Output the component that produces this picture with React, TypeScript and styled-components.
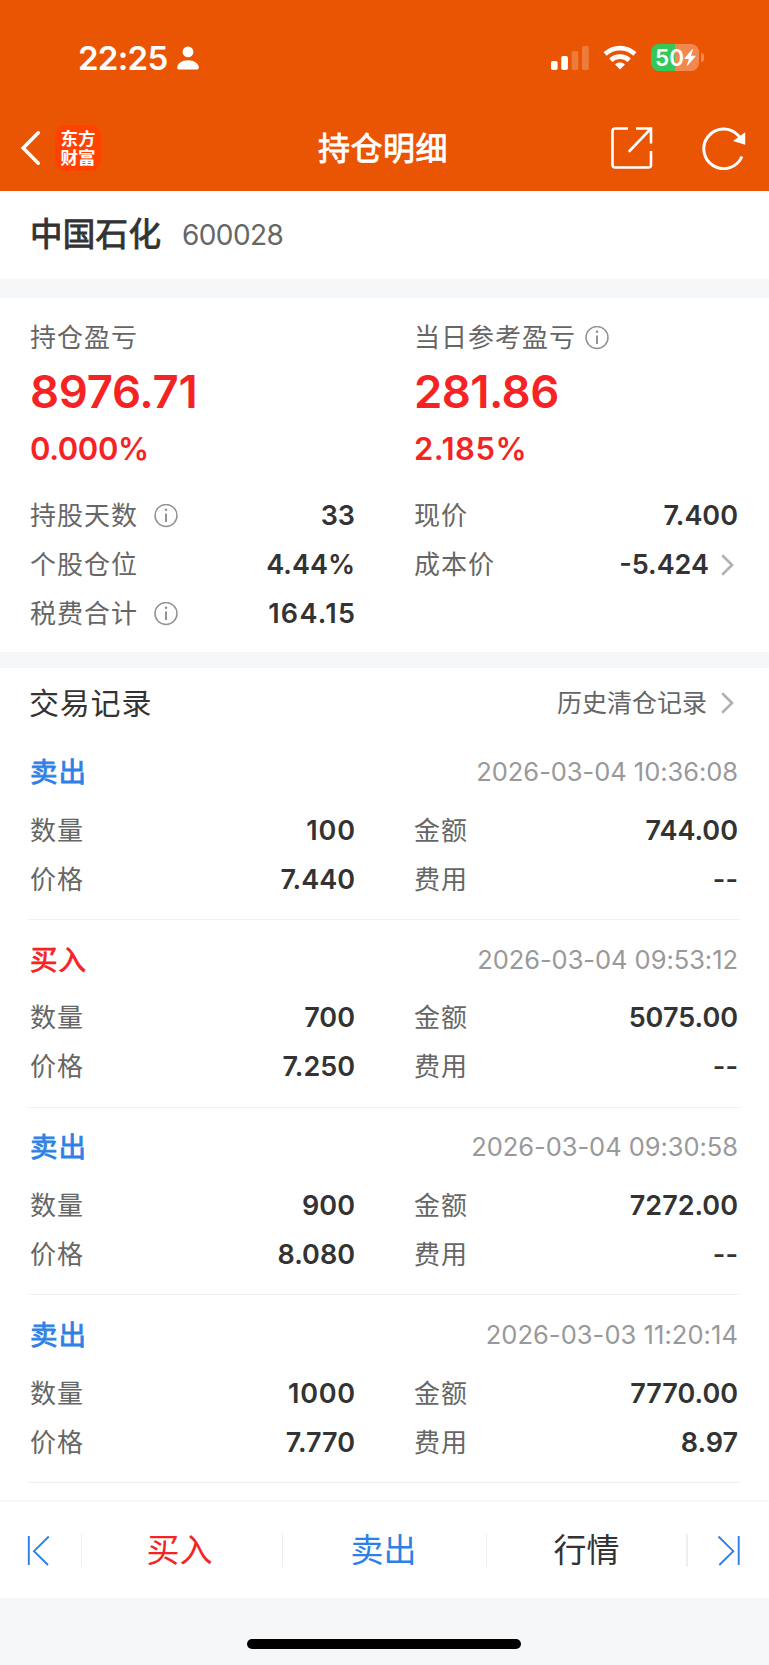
import React from 'react';
import styled, { createGlobalStyle } from 'styled-components';

const ORANGE = '#ea5504';
const RED = '#f52323';
const BLUE = '#2e7fe6';
const INK = '#333';
const GREY = '#666';

const Global = createGlobalStyle`
  * { box-sizing: border-box; }
  html, body { margin: 0; padding: 0; background: #fff; }
  body {
    font-family: Inter, 'Noto Sans CJK SC', sans-serif;
    color: ${INK};
    white-space: nowrap;
  }
  svg { display: block; flex: none; }
`;

const Screen = styled.div`
  width: 769px;
  height: 1665px;
  display: flex;
  flex-direction: column;
  overflow: hidden;
  background: #fff;
`;

const Header = styled.header`
  height: 191px;
  flex: none;
  background: ${ORANGE};
  color: #fff;
`;

const StatusBar = styled.div`
  height: 115px;
  padding: 0 65px 0 78px;
  display: flex;
  justify-content: space-between;
  align-items: center;
`;

const StatusGroup = styled.div<{ $gap: number }>`
  display: flex;
  align-items: center;
  gap: ${(p) => p.$gap}px;
`;

const Clock = styled.span`
  width: 90px;
  font-size: 33px;
  font-weight: 600;
  letter-spacing: -0.7px;
  line-height: 40px;
`;

const Battery = styled.div`
  position: relative;
  width: 48px;
  height: 27px;
  margin-right: 5px;
  border-radius: 8px;
  background: linear-gradient(90deg, #34c759 0 50.5%, #f28850 50.5%);
  display: flex;
  align-items: center;
  padding-left: 4px;
  font-size: 22.5px;
  font-weight: 600;

  &::after {
    content: '';
    position: absolute;
    left: 50px;
    top: 9px;
    width: 3px;
    height: 9px;
    border-radius: 0 3px 3px 0;
    background: #f28850;
  }
`;

const NavBar = styled.nav`
  height: 76px;
  padding: 0 23px 10px 20px;
  display: grid;
  grid-template-columns: 1fr auto 1fr;
  align-items: center;
`;

const NavSide = styled.div<{ $end?: boolean; $gap: number }>`
  display: flex;
  align-items: center;
  justify-content: ${(p) => (p.$end ? 'flex-end' : 'flex-start')};
  gap: ${(p) => p.$gap}px;
`;

const Logo = styled.div`
  width: 46px;
  height: 46px;
  border-radius: 10px;
  background: #ff4200;
  display: flex;
  flex-direction: column;
  align-items: center;
  justify-content: center;
  font-size: 17.5px;
  line-height: 19px;
  font-weight: 700;
`;

const NavTitle = styled.h1`
  margin: 0;
  padding-top: 2px;
  font-size: 32px;
  line-height: 40px;
  font-weight: 400;
  letter-spacing: 0.5px;
  -webkit-text-stroke: 0.8px currentColor;
`;

const StockBar = styled.section`
  height: 88px;
  flex: none;
  padding: 0 30px 1px;
  display: flex;
  align-items: center;
`;

const StockName = styled.span`
  width: 152px;
  font-size: 32.5px;
  font-weight: 400;
  letter-spacing: 0.3px;
  line-height: 44px;
  -webkit-text-stroke: 0.9px currentColor;
`;

const StockCode = styled.span`
  font-size: 28px;
  line-height: 34px;
  letter-spacing: -0.6px;
  color: ${GREY};
`;

const Gap = styled.div<{ $h: number }>`
  height: ${(p) => p.$h}px;
  flex: none;
  background: #f6f7f9;
`;

const Columns = styled.div`
  display: grid;
  grid-template-columns: 325px 324px;
  column-gap: 59px;
  padding: 0 30px;
`;

const Summary = styled.section`
  height: 354px;
  flex: none;
  padding-top: 20px;
`;

const Row = styled.div`
  height: 49px;
  display: flex;
  align-items: center;
`;

const Label = styled.span<{ $gap?: number }>`
  display: flex;
  align-items: center;
  gap: ${(p) => p.$gap ?? 16}px;
  font-size: 26px;
  line-height: 40px;
  height: 40px;
  letter-spacing: 1px;
  color: ${GREY};
`;

const Value = styled.span`
  margin-left: auto;
  font-size: 27px;
  line-height: 40px;
  font-weight: 600;
`;

const Profit = styled.div`
  height: 68px;
  font-size: 45.5px;
  line-height: 68px;
  font-weight: 600;
  color: ${RED};
`;

const Percent = styled.div`
  height: 46px;
  font-size: 31px;
  line-height: 46px;
  font-weight: 600;
  color: ${RED};
  margin-bottom: 19px;
`;

const Records = styled.section`
  height: 832px;
  flex: none;
`;

const RecordsHead = styled.div`
  height: 70px;
  padding: 0 31px 0 29px;
  display: flex;
  align-items: center;
  justify-content: space-between;
`;

const RecordsTitle = styled.h2`
  margin: 0;
  font-size: 30px;
  font-weight: 400;
  letter-spacing: 0.8px;
  line-height: 44px;
`;

const HistoryLink = styled.a`
  display: flex;
  align-items: center;
  font-size: 25px;
  line-height: 40px;
  color: ${GREY};
`;

const Record = styled.article`
  height: 187.7px;
`;

const RecordHead = styled.div`
  height: 68px;
  padding: 0 31px 0 30px;
  display: flex;
  align-items: center;
  justify-content: space-between;
`;

const Side = styled.span<{ $buy?: boolean }>`
  font-size: 27.5px;
  font-weight: 400;
  line-height: 40px;
  letter-spacing: 1px;
  color: ${(p) => (p.$buy ? RED : BLUE)};
  -webkit-text-stroke: 0.8px currentColor;
`;

const Time = styled.time<{ $spacing?: number }>`
  font-size: 25.5px;
  line-height: 40px;
  letter-spacing: ${(p) => p.$spacing ?? -0.05}px;
  color: #999;
`;

const Rule = styled.div`
  height: 1px;
  margin: 15px 30px 0 29px;
  background: #f0f0f1;
`;

const TabBar = styled.footer`
  height: 98px;
  flex: none;
  border-top: 2px solid #f6f7f8;
  display: grid;
  grid-template-columns: 81px 1px 200px 1px 203px 1px 199px 2px 81px;
  align-items: center;
  justify-items: center;
`;

const Tab = styled.span<{ $color: string; $shift?: number }>`
  margin-right: ${(p) => p.$shift ?? 0}px;
  font-size: 33px;
  line-height: 46px;
  color: ${(p) => p.$color};
`;

const Divider = styled.i`
  width: 100%;
  height: 33px;
  background: #eee;
`;

const HomeArea = styled.div`
  flex: 1;
  background: #f6f7f9;
  padding: 41px 0 0 247px;
`;

const HomeIndicator = styled.div`
  width: 274px;
  height: 10px;
  border-radius: 5px;
  background: #000;
`;

const Info = () => (
  <svg width="24" height="24" viewBox="0 0 24 24" fill="none" stroke="#929292">
    <circle cx="12" cy="11.500" r="11" strokeWidth="1.500" />
    <path d="M12 9.500v8.400" strokeWidth="2" />
    <circle cx="12" cy="5.800" r="1.300" fill="#929292" stroke="none" />
  </svg>
);

const Chevron = ({ left }: { left: number }) => (
  <svg width={left + 17} height="22" viewBox={`${-left} 0 ${left + 17} 22`} fill="none" stroke="#b2b2b2" strokeWidth="2.700">
    <path d="M1.200 1.300 11 11 1.200 20.700" />
  </svg>
);

const Person = () => (
  <svg width="22" height="24" viewBox="0 0 22 24" fill="#fff">
    <circle cx="11" cy="5.9" r="5.4" />
    <path d="M0.2 21.5C0.2 17.5 5 14.2 11 14.2s10.800 3.300 10.800 7.300c0 1.500-.8 2-2.200 2H2.400C1 23.500.2 23 .2 21.500Z" />
  </svg>
);

const Signal = () => (
  <svg width="38" height="24" viewBox="0 0 38 24" fill="#fff">
    <rect x="0" y="15" width="6.600" height="9" rx="1.800" />
    <rect x="10.300" y="10" width="6.600" height="14" rx="1.800" />
    <rect x="20.700" y="5" width="6.600" height="19" rx="1.800" opacity=".22" />
    <rect x="31" y="0" width="6.800" height="24" rx="1.800" opacity=".22" />
  </svg>
);

const Wifi = () => (
  <svg width="34" height="25" viewBox="0 0 34 25" fill="none" stroke="#fff" strokeWidth="4.600">
    <path d="M2.100 9C10.400 1.100 23.600 1.100 31.900 9" />
    <path d="M7.800 15.200c5.200-4.800 13.200-4.800 18.400 0" />
    <path d="M12.100 19.400c2.800-2.400 7-2.400 9.800 0L17 24.600Z" fill="#fff" stroke="none" />
  </svg>
);

const Bolt = () => (
  <svg width="12" height="17" viewBox="0 0 12 17" fill="#fff">
    <path d="M8.200.3.500 9.300c-.3.400-.1.700.3.700h4.100l-2 6.100c-.2.700.4.900.8.400l7.700-9c.3-.4.100-.8-.3-.8H7L9 .8C9.200.1 8.600-.1 8.200.3Z" />
  </svg>
);

const Back = () => (
  <svg width="21" height="36" viewBox="0 0 21 36" fill="none" stroke="#fff" strokeWidth="3.500" strokeLinecap="round" strokeLinejoin="miter">
    <path d="M18.300 2.800 3.200 18 18.300 33.200" />
  </svg>
);

const Share = () => (
  <svg width="42" height="42" viewBox="0 0 42 42" fill="none" stroke="#fff" strokeWidth="2.600">
    <path d="M17 1.500H4A2.500 2.500 0 0 0 1.500 4v34A2.500 2.500 0 0 0 4 40.500h33.500A2.500 2.500 0 0 0 40 38V24" />
    <path d="M25 1.500H40V16.500" />
    <path d="M39.500 2 18.500 24" strokeLinecap="round" />
  </svg>
);

const Refresh = () => (
  <svg width="44" height="44" viewBox="0 0 44 44" fill="none" stroke="#fff" strokeWidth="3">
    <path d="M39.900 30.500A19.800 19.800 0 1 1 36 9.200L38.500 12" />
    <path d="M43.200 6.200v12.600l-12.200-3.700Z" fill="#fff" stroke="none" />
  </svg>
);

const First = () => (
  <svg width="30" height="31" viewBox="0 0 30 31" fill="none" stroke={BLUE} strokeWidth="1.900">
    <path d="M2.800 1v29M22.800 1.500 8 16.200 22 30" />
  </svg>
);

const Last = () => (
  <svg width="24" height="31" viewBox="0 0 24 31" fill="none" stroke={BLUE} strokeWidth="1.900">
    <path d="M21.700 1v29M1.500 1.500 16.300 16.200 2.300 30" />
  </svg>
);

const Num = ({ text, ls }: { text: string; ls?: number }) => (
  <Value style={{ letterSpacing: ls, marginRight: ls ? -ls : 0 }}>{text}</Value>
);

const records = [
  { buy: false, time: '2026-03-04 10:36:08', qty: '100', price: '7.440', amount: '744.00', fee: '--', qtySpacing: 0.9 },
  { buy: true, time: '2026-03-04 09:53:12', qty: '700', price: '7.250', amount: '5075.00', fee: '--' },
  { buy: false, time: '2026-03-04 09:30:58', qty: '900', price: '8.080', amount: '7272.00', fee: '--' },
  { buy: false, time: '2026-03-03 11:20:14', qty: '1000', price: '7.770', amount: '7770.00', fee: '8.97', qtySpacing: 0.7, timeSpacing: 0.06 },
];

export default function App() {
  return (
    <Screen>
      <Global />
      <Header>
        <StatusBar>
          <StatusGroup $gap={9}>
            <Clock>22:25</Clock>
            <Person />
          </StatusGroup>
          <StatusGroup $gap={14}>
            <Signal />
            <Wifi />
            <Battery>
              50
              <Bolt />
            </Battery>
          </StatusGroup>
        </StatusBar>
        <NavBar>
          <NavSide $gap={14}>
            <Back />
            <Logo>
              <span>东方</span>
              <span>财富</span>
            </Logo>
          </NavSide>
          <NavTitle>持仓明细</NavTitle>
          <NavSide $end $gap={49}>
            <Share />
            <Refresh />
          </NavSide>
        </NavBar>
      </Header>

      <StockBar>
        <StockName>中国石化</StockName>
        <StockCode>600028</StockCode>
      </StockBar>
      <Gap $h={19} />

      <Summary>
        <Columns>
          <div>
            <Label>持仓盈亏</Label>
            <Profit style={{ letterSpacing: -0.3 }}>8976.71</Profit>
            <Percent style={{ letterSpacing: -0.4 }}>0.000%</Percent>
            <Row><Label>持股天数 <Info /></Label><Num text="33" /></Row>
            <Row><Label>个股仓位</Label><Num text="4.44%" /></Row>
            <Row><Label>税费合计 <Info /></Label><Num text="164.15" ls={1.3} /></Row>
          </div>
          <div>
            <Label $gap={9}>当日参考盈亏 <Info /></Label>
            <Profit style={{ letterSpacing: -0.6 }}>281.86</Profit>
            <Percent style={{ letterSpacing: 0.5 }}>2.185%</Percent>
            <Row><Label>现价</Label><Num text="7.400" /></Row>
            <Row><Label>成本价</Label><Num text="-5.424" /><Chevron left={12} /></Row>
          </div>
        </Columns>
      </Summary>
      <Gap $h={16} />

      <Records>
        <RecordsHead>
          <RecordsTitle>交易记录</RecordsTitle>
          <HistoryLink>历史清仓记录<Chevron left={14} /></HistoryLink>
        </RecordsHead>
        {records.map((r) => (
          <Record key={r.time}>
            <RecordHead>
              <Side $buy={r.buy}>{r.buy ? '买入' : '卖出'}</Side>
              <Time $spacing={r.timeSpacing}>{r.time}</Time>
            </RecordHead>
            <Columns>
              <Row><Label>数量</Label><Num text={r.qty} ls={r.qtySpacing} /></Row>
              <Row><Label>金额</Label><Num text={r.amount} /></Row>
              <Row><Label>价格</Label><Num text={r.price} /></Row>
              <Row><Label>费用</Label><Num text={r.fee} /></Row>
            </Columns>
            <Rule />
          </Record>
        ))}
      </Records>

      <TabBar>
        <First />
        <Divider />
        <Tab $color={RED} $shift={5}>买入</Tab>
        <Divider />
        <Tab $color={BLUE} $shift={2}>卖出</Tab>
        <Divider />
        <Tab $color={INK}>行情</Tab>
        <Divider />
        <Last />
      </TabBar>
      <HomeArea>
        <HomeIndicator />
      </HomeArea>
    </Screen>
  );
}
